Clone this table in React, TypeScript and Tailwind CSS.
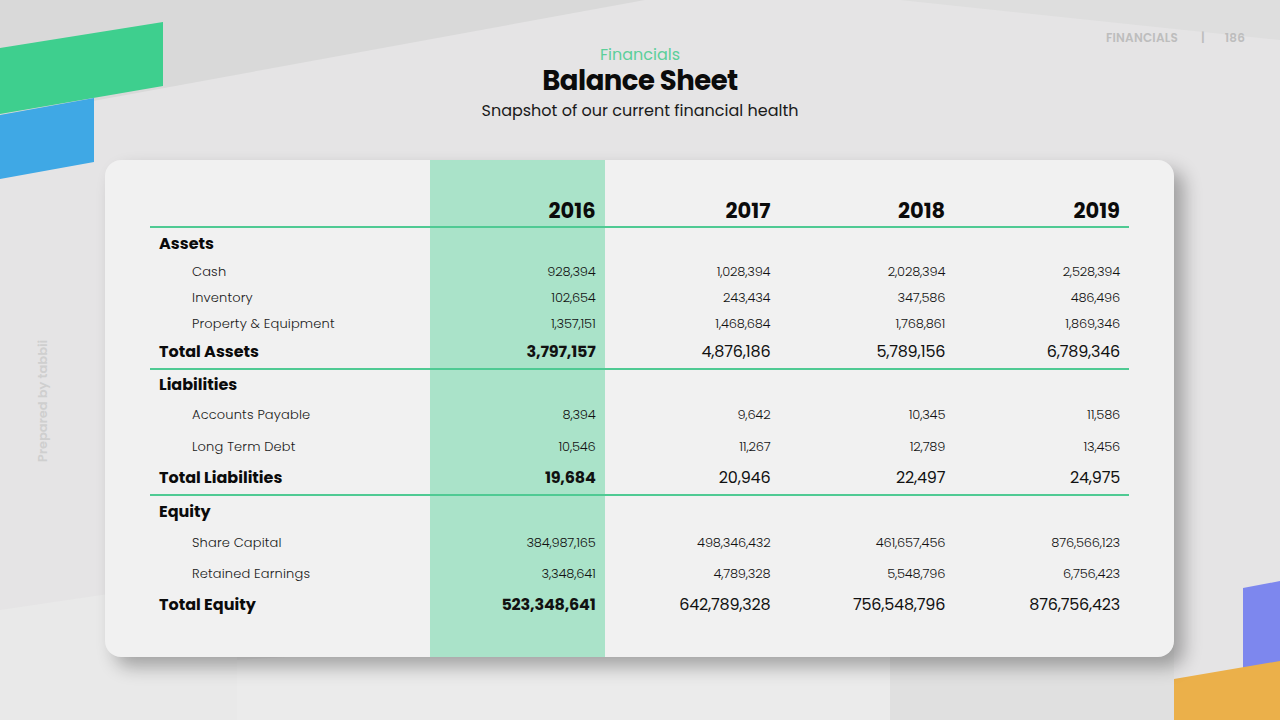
import React from "react";

type Row = {
    label: string;
    kind: "section" | "item" | "total";
    values?: string[];
    h: number;
    line?: boolean;
};

const rows: Row[] = [
    { label: "Assets", kind: "section", h: 31 },
    { label: "Cash", kind: "item", h: 26, values: ["928,394", "1,028,394", "2,028,394", "2,528,394"] },
    { label: "Inventory", kind: "item", h: 26, values: ["102,654", "243,434", "347,586", "486,496"] },
    { label: "Property & Equipment", kind: "item", h: 25, values: ["1,357,151", "1,468,684", "1,768,861", "1,869,346"] },
    { label: "Total Assets", kind: "total", h: 32, line: true, values: ["3,797,157", "4,876,186", "5,789,156", "6,789,346"] },
    { label: "Liabilities", kind: "section", h: 28 },
    { label: "Accounts Payable", kind: "item", h: 34, values: ["8,394", "9,642", "10,345", "11,586"] },
    { label: "Long Term Debt", kind: "item", h: 30, values: ["10,546", "11,267", "12,789", "13,456"] },
    { label: "Total Liabilities", kind: "total", h: 32, line: true, values: ["19,684", "20,946", "22,497", "24,975"] },
    { label: "Equity", kind: "section", h: 30 },
    { label: "Share Capital", kind: "item", h: 33, values: ["384,987,165", "498,346,432", "461,657,456", "876,566,123"] },
    { label: "Retained Earnings", kind: "item", h: 30, values: ["3,348,641", "4,789,328", "5,548,796", "6,756,423"] },
    { label: "Total Equity", kind: "total", h: 32, values: ["523,348,641", "642,789,328", "756,548,796", "876,756,423"] },
];

const years = ["2016", "2017", "2018", "2019"];
const font = { fontFamily: "Poppins, Inter, 'Noto Sans', sans-serif" };

function Backdrop() {
    return (
        <svg className="absolute inset-0" width="1280" height="720" viewBox="0 0 1280 720">
            <rect width="1280" height="720" fill="#e5e4e5" />
            <polygon points="0,0 645,0 0,118" fill="#d9d9d9" />
            <polygon points="645,0 1280,0 1280,40 900,0" fill="#dedede" />
            <polygon points="0,610 237,575 237,720 0,720" fill="#e9e9e9" />
            <polygon points="237,660 890,620 890,720 237,720" fill="#ebebeb" />
            <polygon points="890,650 1174,640 1174,720 890,720" fill="#e0e0e0" />
            <polygon points="0,48 163,22 163,86 0,114" fill="#3ecf8e" />
            <polygon points="0,115 94,98 94,162 0,179" fill="#3fa8e5" />
            <polygon points="1243,588 1280,581 1280,670 1243,676" fill="#7d87ee" />
            <polygon points="1174,679 1280,661 1280,720 1174,720" fill="#ebb04a" />
        </svg>
    );
}

function Cell({ row, value, col }: { row: Row; value?: string; col: number }) {
    const border = row.line ? "border-b-2 border-[#4fca93]" : "";
    let cls = "text-[13px] font-light";
    if (row.kind === "total") cls = col === 0 ? "text-[16px] font-bold" : "text-[16px] font-normal";
    return (
        <div style={{ height: row.h + (row.line ? 2 : 0) }} className={`flex items-center justify-end pr-[9px] ${border}`}>
            <span className={`${cls} text-[#111] tracking-[-0.2px]`}>{value}</span>
        </div>
    );
}

export default function App() {
    return (
        <div className="relative w-[1280px] h-[720px] overflow-hidden" style={font}>
            <Backdrop />

            <div className="absolute top-[29px] left-[1106px] flex items-center text-[12px] font-semibold text-[#bdbdbd] tracking-[0.2px]">
                <span>FINANCIALS</span>
                <span className="ml-[23px]">|</span>
                <span className="ml-[20px]">186</span>
            </div>

            <div className="absolute left-[43px] top-[401px] -translate-x-1/2 -translate-y-1/2 -rotate-90 whitespace-nowrap text-[13px] font-semibold text-[#cfcfcf]">
                Prepared by tabbii
            </div>

            <div className="relative flex flex-col items-center pt-[46px]">
                <div className="text-[16px] leading-[17px] text-[#5ccf9a]">Financials</div>
                <div className="text-[27.5px] leading-[34px] mt-[1px] font-bold text-[#0b0b0b] tracking-[-0.5px]">Balance Sheet</div>
                <div className="text-[16px] leading-[22px] text-[#1a1a1a] mt-[2px]">Snapshot of our current financial health</div>
            </div>

            <div className="relative ml-[105px] mt-[38px] w-[1069px] h-[497px] rounded-[16px] bg-[#f1f1f1] shadow-[10px_10px_18px_rgba(0,0,0,0.3)] flex px-[45px] overflow-hidden">
                <div className="w-[280px] flex flex-col">
                    <div className="h-[68px] border-b-2 border-[#4fca93]" />
                    {rows.map((r) => (
                        <div
                            key={r.label}
                            style={{ height: r.h + (r.line ? 2 : 0) }}
                            className={`flex items-center ${r.line ? "border-b-2 border-[#4fca93]" : ""} ${r.kind === "item" ? "pl-[33px] ml-[9px] text-[13px] font-light text-[#1a1a1a] tracking-[0.15px]" : `pl-[9px] text-[16px] font-bold text-[#0b0b0b] ${r.kind === "section" ? "pt-[1px]" : ""}`}`}
                        >
                            {r.label}
                        </div>
                    ))}
                </div>
                {years.map((y, i) => (
                    <div key={y} className={`w-[175px] flex flex-col ${i === 0 ? "bg-[#aae3c9]" : ""}`}>
                        <div className="h-[68px] border-b-2 border-[#4fca93] flex items-end justify-end pr-[9px]">
                            <span className="text-[21px] leading-[30px] font-bold text-[#0b0b0b]">{y}</span>
                        </div>
                        {rows.map((r) => (
                            <Cell key={r.label} row={r} value={r.values?.[i]} col={i} />
                        ))}
                    </div>
                ))}
            </div>
        </div>
    );
}
